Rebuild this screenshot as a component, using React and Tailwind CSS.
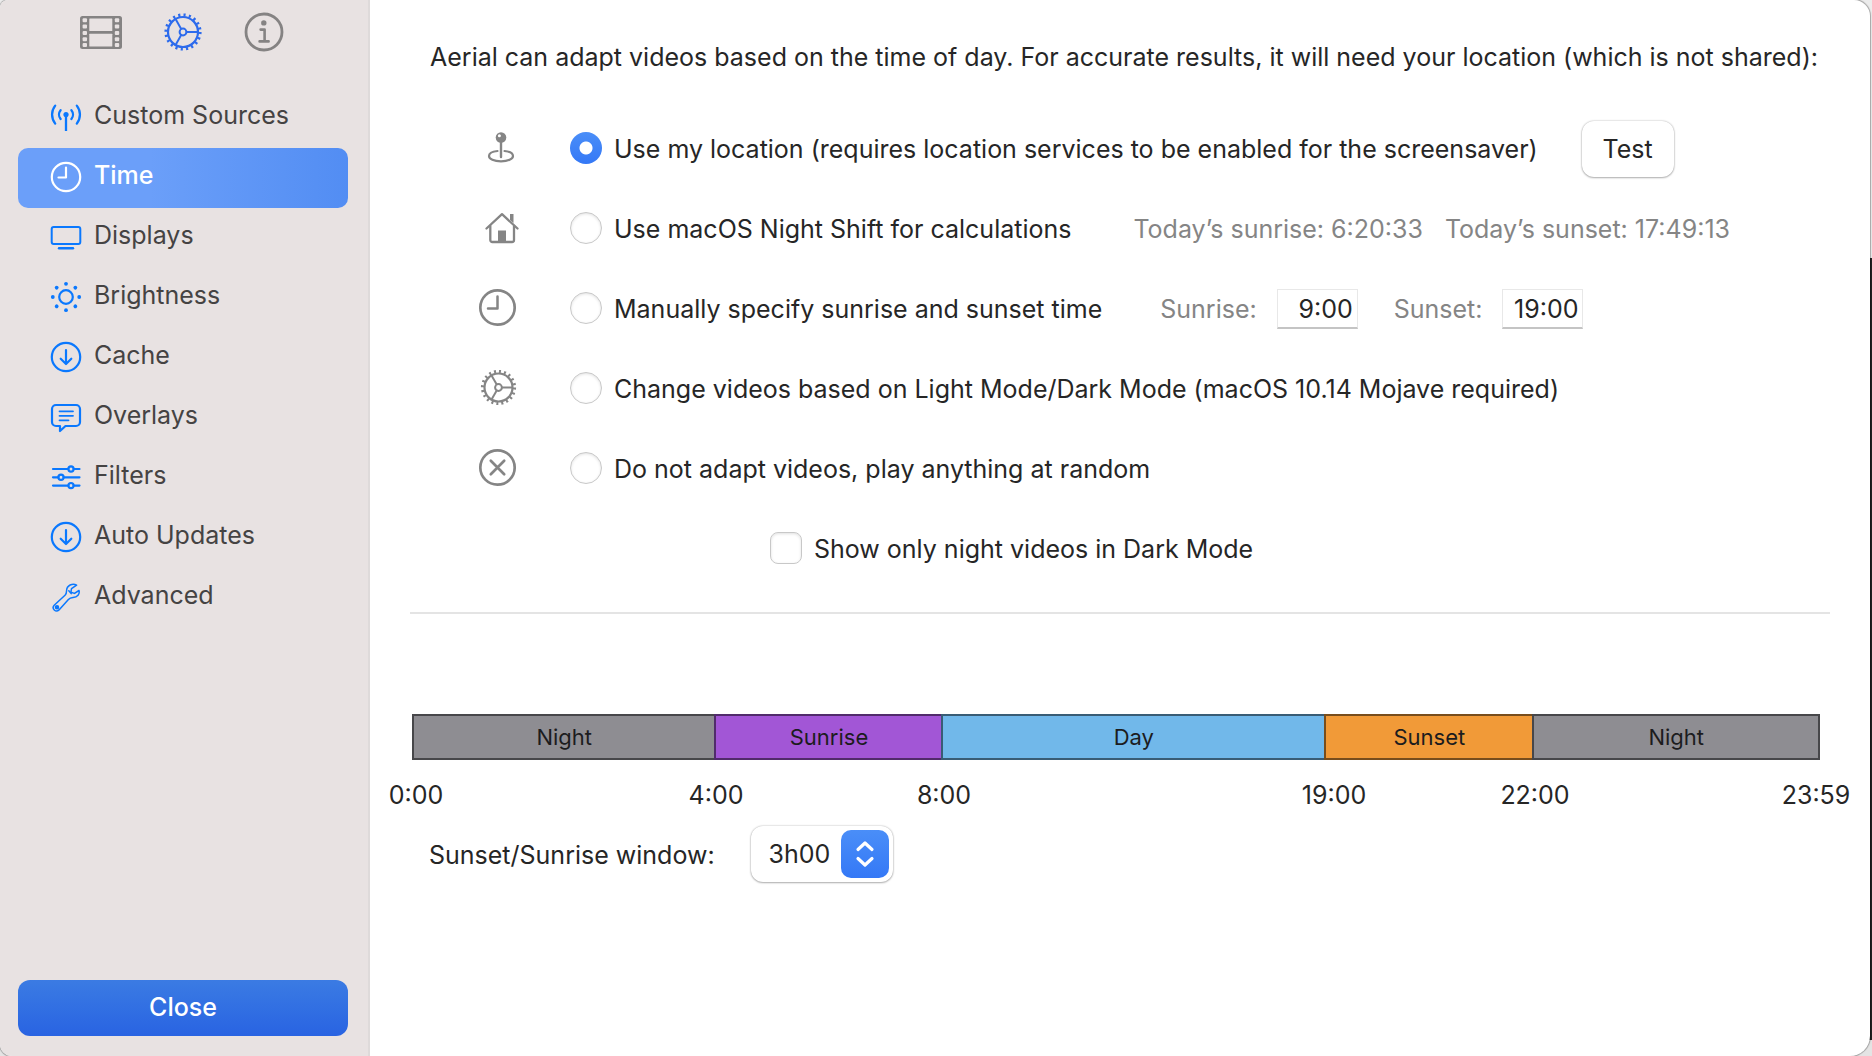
import { useState } from 'react';

const strokeProps = {
  fill: 'none',
  stroke: 'currentColor',
  strokeLinecap: 'round',
  strokeLinejoin: 'round',
};

// 20 teeth round a ring, three spokes and a hub
function Gear({ cx, cy, r }) {
  const teeth = 2 * Math.PI * (r - 1.6);
  const spokes = [0, 120, 240];
  return (
    <g fill="none" stroke="currentColor" strokeWidth="2">
      <circle
        cx={cx}
        cy={cy}
        r={r - 1.6}
        strokeWidth="3.2"
        strokeDasharray={`${teeth / 50} ${(teeth * 3) / 100}`}
      />
      <circle cx={cx} cy={cy} r={r - 3.6} strokeWidth="2.2" />
      <circle cx={cx} cy={cy} r="3.4" />
      {spokes.map((deg) => (
        <path key={deg} d={`M${cx + 3.6} ${cy}H${cx + r - 4}`} transform={`rotate(${deg} ${cx} ${cy})`} />
      ))}
    </g>
  );
}

function FilmIcon() {
  const holes = [2.3, 8.6, 14.9, 21.2, 27.1];
  return (
    <svg viewBox="0 0 42 33" className="h-[33px] w-[42px]">
      <rect x="0" y="0" width="42" height="33" rx="2.5" fill="currentColor" />
      <rect x="9.3" y="2.4" width="23" height="12.6" rx="0.5" fill="#e8e2e2" />
      <rect x="9.3" y="17.8" width="23" height="12.6" rx="0.5" fill="#e8e2e2" />
      {holes.map((y) => (
        <g key={y} fill="#e8e2e2">
          <rect x="2.6" y={y} width="4.4" height="4" rx="1" />
          <rect x="34.8" y={y} width="4.4" height="4" rx="1" />
        </g>
      ))}
    </svg>
  );
}

function GearIcon() {
  return (
    <svg viewBox="0 0 38 38" className="size-[38px]">
      <Gear cx={19} cy={19} r={18.6} />
    </svg>
  );
}

function InfoIcon() {
  return (
    <svg viewBox="0 0 40 40" className="size-10">
      <circle cx="20" cy="20" r="18" {...strokeProps} strokeWidth="2.8" />
      <circle cx="19.8" cy="10.9" r="2.7" fill="currentColor" />
      <path d="M16.6 17.6h4v11.6M15.6 29.4h9" {...strokeProps} strokeWidth="2.6" />
    </svg>
  );
}

const navShapes = {
  antenna: (
    <g {...strokeProps} strokeWidth="2.3">
      <circle cx="16" cy="13.5" r="2.6" fill="currentColor" stroke="none" />
      <path d="M16 14v16" strokeLinecap="butt" />
      <path d="M10.6 9.2a7 7 0 0 0 0 8.8M21.4 9.2a7 7 0 0 1 0 8.8M5.2 4.6a14.5 14.5 0 0 0 0 18M26.8 4.6a14.5 14.5 0 0 1 0 18" />
    </g>
  ),
  clock: (
    <g {...strokeProps} strokeWidth="2.2">
      <circle cx="16" cy="16" r="14.2" />
      <path d="M16 6.5V16.5H8.5" />
    </g>
  ),
  display: (
    <g {...strokeProps} strokeWidth="2">
      <rect x="1.7" y="6" width="28.6" height="17" rx="2" />
      <path d="M9 27.3h14" strokeWidth="2.4" />
    </g>
  ),
  sun: (
    <g>
      <circle cx="16" cy="16" r="6.8" {...strokeProps} strokeWidth="2.2" />
      {[0, 45, 90, 135, 180, 225, 270, 315].map((deg) => (
        <circle key={deg} cx="29.2" cy="16" r="1.9" fill="currentColor" transform={`rotate(${deg} 16 16)`} />
      ))}
    </g>
  ),
  download: (
    <g {...strokeProps} strokeWidth="2.2">
      <circle cx="16" cy="16" r="14.2" />
      <path d="M16 9v13.5M10.7 17.7L16 23L21.3 17.7" />
    </g>
  ),
  bubble: (
    <g {...strokeProps} strokeWidth="2.2">
      <path d="M6 4H26a4 4 0 0 1 4 4v13a4 4 0 0 1-4 4H15.500L10 30V25H6a4 4 0 0 1-4-4V8a4 4 0 0 1 4-4Z" />
      <path d="M9.5 10.3h13.5M9.5 14.8h13.5M9.5 19.3h9" strokeWidth="1.8" />
    </g>
  ),
  sliders: (
    <g {...strokeProps} strokeWidth="2.2">
      <path d="M3 8h15.3M23.7 8H29.5M3 16.3h5.3M13.7 16.3H29.5M3 24.6h15.3M23.7 24.6H29.5" />
      <circle cx="21" cy="8" r="2.6" />
      <circle cx="11" cy="16.3" r="2.6" />
      <circle cx="21" cy="24.6" r="2.6" />
    </g>
  ),
  wrench: (
    <g {...strokeProps} strokeWidth="1.5">
      <path d="M26.6 4.1C22.5 1.7 16.7 4.5 16.6 9.5C16.6 12 16.4 12.8 15 14.2L4.2 24.2C1.2 27.4 5.8 32 9 28.9L18.4 18.4C19.8 16.9 20.7 16.7 23 16.5C27.5 16.2 30 13 29 9.5L24.5 12.4L20.9 11.2L21.5 7.6Z" />
      <circle cx="7" cy="26.2" r="1.5" fill="currentColor" />
      <path d="M18.8 9.8l2.4 2.8" />
    </g>
  ),
};

const navItems = [
  { label: 'Custom Sources', icon: 'antenna' },
  { label: 'Time', icon: 'clock' },
  { label: 'Displays', icon: 'display' },
  { label: 'Brightness', icon: 'sun' },
  { label: 'Cache', icon: 'download' },
  { label: 'Overlays', icon: 'bubble' },
  { label: 'Filters', icon: 'sliders' },
  { label: 'Auto Updates', icon: 'download' },
  { label: 'Advanced', icon: 'wrench' },
];

const optionShapes = {
  pin: (
    <g {...strokeProps} strokeWidth="2.2">
      <circle cx="25" cy="13.5" r="5.3" fill="currentColor" stroke="none" />
      <circle cx="23.4" cy="11.8" r="1.5" fill="#fff" stroke="none" />
      <path d="M25 18v15" strokeWidth="2.4" />
      <path d="M21.5 27C16 27.5 13 29.500 13 32C13 35 18 37.300 25 37.300S37 35 37 32C37 29.500 34 27.500 28.500 27" />
    </g>
  ),
  home: (
    <g {...strokeProps} strokeWidth="2.3">
      <path d="M10.5 24.5L26 10.2L41.5 24.5" />
      <path d="M14.3 22V36a2 2 0 0 0 2 2H36a2 2 0 0 0 2-2V22" />
      <path d="M22 26.500h8v11h-8ZM34 10h3.500v9L34 16Z" fill="currentColor" stroke="none" />
    </g>
  ),
  clock: (
    <g {...strokeProps} strokeWidth="2.7">
      <circle cx="21.5" cy="23.5" r="17.2" />
      <path d="M21.5 12.500V24.500H12" strokeWidth="2.500" />
    </g>
  ),
  gear: <Gear cx={22.5} cy={23.5} r={17.6} />,
  cross: (
    <g {...strokeProps} strokeWidth="2.7">
      <circle cx="21.5" cy="23.5" r="17.2" />
      <path d="M14.8 16.8l13.4 13.4M28.2 16.8L14.8 30.2" />
    </g>
  ),
};

const options = [
  { id: 'location', icon: 'pin', label: 'Use my location (requires location services to be enabled for the screensaver)' },
  { id: 'nightshift', icon: 'home', label: 'Use macOS Night Shift for calculations' },
  { id: 'manual', icon: 'clock', label: 'Manually specify sunrise and sunset time' },
  { id: 'appearance', icon: 'gear', label: 'Change videos based on Light Mode/Dark Mode (macOS 10.14 Mojave required)' },
  { id: 'none', icon: 'cross', label: 'Do not adapt videos, play anything at random' },
];

const segments = [
  { label: 'Night', span: 303, color: 'bg-[#8e8d92] border-[#47474a]' },
  { label: 'Sunrise', span: 227, color: 'bg-[#a256d6] border-[#512b6b]' },
  { label: 'Day', span: 384, color: 'bg-[#71b8ea] border-[#395c75]' },
  { label: 'Sunset', span: 208, color: 'bg-[#f19a38] border-[#784d1c]' },
  { label: 'Night', span: 286, color: 'bg-[#8e8d92] border-[#47474a]' },
];

const ticks = [
  { label: '0:00', span: 300 },
  { label: '4:00', span: 228 },
  { label: '8:00', span: 390 },
  { label: '19:00', span: 201 },
  { label: '22:00', span: 281 },
  { label: '23:59', span: 0 },
];

function Sidebar() {
  return (
    <aside className="flex w-[370px] shrink-0 flex-col border-r-2 border-[#dedada] bg-[#e8e2e2] pr-5 pb-5 pl-[18px]">
      <div className="flex h-16 items-center gap-[42px] pl-[62px] text-[#858383]">
        <button aria-label="Videos"><FilmIcon /></button>
        <button aria-label="Settings" className="text-[#2d6bec]"><GearIcon /></button>
        <button aria-label="Info"><InfoIcon /></button>
      </div>
      <nav className="mt-6">
        {navItems.map(({ label, icon }) => {
          const active = label === 'Time';
          return (
            <a
              key={label}
              href="#"
              className={
                active
                  ? 'flex h-[60px] items-center gap-3 rounded-[10px] bg-linear-to-r from-[#6b9ff9] from-40% to-[#528df3] pb-[2px] pl-8 font-medium text-white'
                  : 'flex h-[60px] items-center gap-3 pb-[2px] pl-8 text-[#454343]'
              }
            >
              <svg viewBox="0 0 32 32" className={active ? 'size-8 text-white' : 'size-8 text-[#0a78fe]'}>
                {navShapes[icon]}
              </svg>
              <span className="pb-1">{label}</span>
            </a>
          );
        })}
      </nav>
      <button className="mt-auto h-14 rounded-xl bg-linear-to-b from-[#3b7be3] to-[#2963e2] pb-[2px] font-medium text-white">
        Close
      </button>
    </aside>
  );
}

function TimeField({ id, label, value }) {
  return (
    <div className="flex items-center gap-5">
      <label htmlFor={id} className="text-[#858585]">{label}</label>
      <input
        id={id}
        type="text"
        defaultValue={value}
        className="h-10 w-[81px] border border-b-2 border-[#e8e8e8] border-b-[#c4c4c4] bg-white pr-1 text-right outline-none"
      />
    </div>
  );
}

function OptionExtras({ id }) {
  if (id === 'location') {
    return (
      <button className="ml-11 h-14 w-[92px] rounded-xl bg-white shadow-[0_0_2px_rgba(0,0,0,0.3),0_1px_2px_rgba(0,0,0,0.25)]">
        Test
      </button>
    );
  }
  if (id === 'nightshift') {
    return (
      <div className="ml-[62px] flex gap-[22px] text-[#858585]">
        <span>Today’s sunrise: 6:20:33</span>
        <span>Today’s sunset: 17:49:13</span>
      </div>
    );
  }
  if (id === 'manual') {
    return (
      <div className="ml-[58px] flex gap-9">
        <TimeField id="sunrise" label="Sunrise:" value="9:00" />
        <TimeField id="sunset" label="Sunset:" value="19:00" />
      </div>
    );
  }
  return null;
}

function Timeline() {
  return (
    <div>
      <div className="mr-[50px] ml-[42px] flex h-[46px] text-[22px] text-[#1c1c1e]">
        {segments.map(({ label, span, color }, i) => (
          <div
            key={i}
            className={`flex basis-0 items-center justify-center border-y-2 border-l-2 last:border-r-2 ${color}`}
            style={{ flexGrow: span }}
          >
            {label}
          </div>
        ))}
      </div>
      <div className="mt-[15px] mr-[54px] ml-[46px] flex h-10 items-center">
        {ticks.map(({ label, span }) => (
          <div key={label} className="basis-0" style={{ flexGrow: span }}>
            <div className="flex w-0 justify-center">{label}</div>
          </div>
        ))}
      </div>
    </div>
  );
}

export default function App() {
  const [mode, setMode] = useState('location');

  return (
    <div className="flex min-h-screen bg-[linear-gradient(#ececec_258px,#222_258px,#222_calc(100%-16px),#e4e4e4_calc(100%-16px))] pr-[2px] font-['Inter','Liberation_Sans',sans-serif] text-[25px] leading-8 text-[#262626]">
      <div className="flex flex-1 overflow-hidden rounded-tl-lg rounded-tr-2xl rounded-br-[20px] rounded-bl-xl bg-white shadow-[0_0_1px_1px_rgba(0,0,0,0.3)]">
        <Sidebar />
        <main className="min-w-0 flex-1 pt-[41px]">
          <p className="pl-[60px] whitespace-nowrap">
            Aerial can adapt videos based on the time of day. For accurate results, it will need your location (which is not shared):
          </p>
          <div className="mt-[35px] pl-[106px]">
            {options.map(({ id, icon, label }) => (
              <div key={id} className="flex h-20 items-center whitespace-nowrap">
                <svg viewBox="0 0 48 48" className="mr-[46px] size-12 shrink-0 text-[#858585]">
                  {optionShapes[icon]}
                </svg>
                <input
                  id={id}
                  type="radio"
                  name="mode"
                  checked={mode === id}
                  onChange={() => setMode(id)}
                  className="size-8 shrink-0 appearance-none rounded-full border border-[#c8c8c8] bg-white shadow-[inset_0_1px_3px_rgba(0,0,0,0.12)] checked:border-0 checked:bg-[radial-gradient(circle,#fff_6px,transparent_7px),linear-gradient(#4a8ef8,#3478f6)] checked:shadow-none"
                />
                <div className="flex items-center pt-[2px] pl-3">
                  <label htmlFor={id}>{label}</label>
                  <OptionExtras id={id} />
                </div>
              </div>
            ))}
            <div className="ml-[294px] flex h-20 items-center gap-3">
              <input
                id="dark-night"
                type="checkbox"
                className="size-8 appearance-none rounded-lg border border-[#c8c8c8] bg-white shadow-[inset_0_1px_3px_rgba(0,0,0,0.12)] checked:bg-[#3478f6]"
              />
              <label htmlFor="dark-night" className="pt-[2px]">Show only night videos in Dark Mode</label>
            </div>
          </div>
          <hr className="mt-6 mr-10 mb-[100px] ml-10 border-t-2 border-[#e4e4e4]" />
          <Timeline />
          <div className="mt-[11px] flex items-center pl-[59px]">
            <label htmlFor="window" className="mr-9 pt-[2px]">Sunset/Sunrise window:</label>
            <div className="relative">
              <select
                id="window"
                defaultValue="3h00"
                className="h-14 w-[142px] appearance-none rounded-xl bg-white pl-[18px] shadow-[0_0_2px_rgba(0,0,0,0.3),0_1px_2px_rgba(0,0,0,0.25)] outline-none"
              >
                <option>1h00</option>
                <option>2h00</option>
                <option>3h00</option>
                <option>4h00</option>
              </select>
              <span className="pointer-events-none absolute top-1 right-1 flex size-12 items-center justify-center rounded-[10px] bg-linear-to-b from-[#4a8ef8] to-[#3478f6] text-white">
                <svg viewBox="0 0 20 28" className="h-7 w-5">
                  <path d="M3 9.5L10 3L17 9.5M3 18.5L10 25L17 18.5" {...strokeProps} strokeWidth="3.2" />
                </svg>
              </span>
            </div>
          </div>
        </main>
      </div>
    </div>
  );
}
